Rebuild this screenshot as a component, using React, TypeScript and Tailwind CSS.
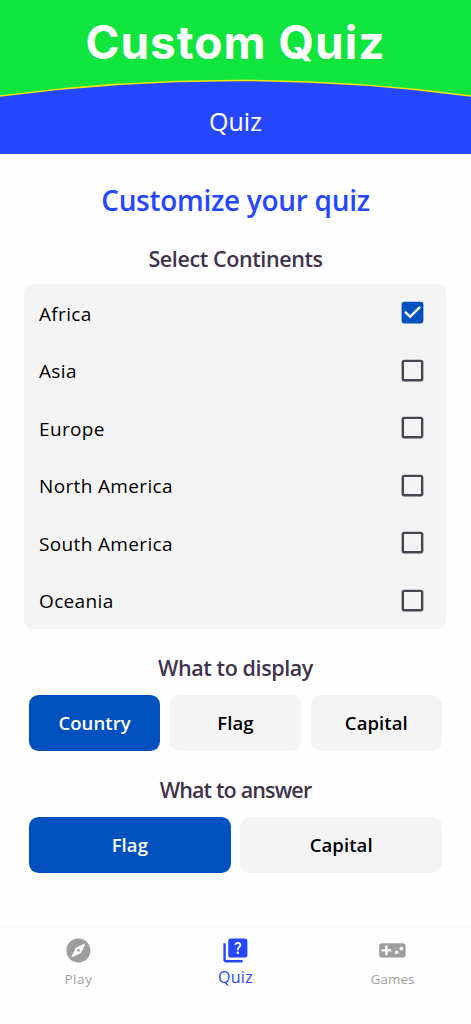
import React, { useState } from "react";
import {
  MdCheckBox,
  MdCheckBoxOutlineBlank,
  MdExplore,
  MdQuiz,
  MdVideogameAsset,
} from "react-icons/md";

const CONTINENTS = ["Africa", "Asia", "Europe", "North America", "South America", "Oceania"];

interface OptionRowProps {
  options: string[];
  value: string;
  onChange: (value: string) => void;
}

function OptionRow({ options, value, onChange }: OptionRowProps) {
  return (
    <div className="mx-[29px] flex h-14 gap-[9.6px]">
      {options.map((option) => (
        <button
          key={option}
          type="button"
          onClick={() => onChange(option)}
          className={`flex-1 rounded-[9.6px] text-[18.5px] font-semibold leading-none tracking-[0.1px] ${
            option === value ? "bg-[#0050bd] text-white" : "bg-[#f4f4f4] text-black"
          }`}
        >
          {option}
        </button>
      ))}
    </div>
  );
}

interface SectionTitleProps {
  children: React.ReactNode;
  tight?: boolean;
}

function SectionTitle({ children, tight }: SectionTitleProps) {
  return (
    <h3
      className={`flex h-8 items-center justify-center text-[21.5px] font-semibold text-[#40334c] ${
        tight ? "tracking-[-0.85px]" : "tracking-[-0.4px]"
      }`}
    >
      {children}
    </h3>
  );
}

export default function App() {
  const [selected, setSelected] = useState<string[]>(["Africa"]);
  const [display, setDisplay] = useState("Country");
  const [answer, setAnswer] = useState("Flag");

  const toggle = (name: string) =>
    setSelected((prev) =>
      prev.includes(name) ? prev.filter((item) => item !== name) : [...prev, name]
    );

  return (
    <div
      className="flex h-[1024px] w-[471px] flex-col overflow-hidden bg-[#fefefe]"
      style={{ fontFamily: '"Open Sans","Noto Sans",sans-serif' }}
    >
      <header className="relative h-[154px] shrink-0 bg-[#2547ff]">
        <svg className="absolute inset-0" width="471" height="154" viewBox="0 0 471 154">
          <path d="M0 0H471V96Q235.5 65 0 96Z" fill="#0fe53c" />
          <path d="M0 96Q235.5 65 471 96" fill="none" stroke="#f5e800" strokeWidth="1.5" />
        </svg>
        <div className="relative flex h-full flex-col items-center">
          <h1
            className="flex h-[86px] items-center whitespace-nowrap pb-0.5 text-[46px] font-bold tracking-[1px] text-white"
            style={{ fontFamily: "Inter,sans-serif" }}
          >
            Custom Quiz
          </h1>
          <p className="mt-[15px] text-[25px] leading-10 text-white">Quiz</p>
        </div>
      </header>

      <main className="flex flex-1 flex-col">
        <h2 className="mt-[26px] flex h-10 items-center justify-center text-[28px] font-semibold tracking-[-0.3px] text-[#2547ff]">
          Customize your quiz
        </h2>
        <div className="mt-[23px]">
          <SectionTitle>Select Continents</SectionTitle>
        </div>

        <ul className="ml-[24px] mr-[24.5px] mt-[9px] h-[345px] rounded-[9.6px] bg-[#f4f4f4]">
          {CONTINENTS.map((name) => (
            <li key={name} className="h-[57.5px]">
              <button
                type="button"
                onClick={() => toggle(name)}
                className="flex h-full w-full items-center justify-between pl-[15px] pr-[19.5px] text-[19px] tracking-[0.35px] text-black"
              >
                <span className="pt-0.5">{name}</span>
                {selected.includes(name) ? (
                  <MdCheckBox size={29} color="#0050bd" />
                ) : (
                  <MdCheckBoxOutlineBlank size={29} color="#494550" />
                )}
              </button>
            </li>
          ))}
        </ul>

        <div className="mb-[11px] mt-[23px]">
          <SectionTitle>What to display</SectionTitle>
        </div>
        <OptionRow options={["Country", "Flag", "Capital"]} value={display} onChange={setDisplay} />

        <div className="mb-[11px] mt-[23px]">
          <SectionTitle tight>What to answer</SectionTitle>
        </div>
        <OptionRow options={["Flag", "Capital"]} value={answer} onChange={setAnswer} />
      </main>

      <nav className="flex h-[98px] shrink-0 border-t border-[#f8f8f8] bg-[#fefefe] pt-[9px] text-[#9e9e9e]">
        <div className="flex flex-1 flex-col items-center">
          <MdExplore size={28.8} />
          <span className="mt-[4px] text-[13.5px] leading-5 tracking-[0.6px]">Play</span>
        </div>
        <div className="flex flex-1 flex-col items-center text-[#2547ff]">
          <MdQuiz size={28.8} />
          <span className="mt-[2px] text-[16px] leading-5 tracking-[0.3px]">Quiz</span>
        </div>
        <div className="flex flex-1 flex-col items-center">
          <MdVideogameAsset size={28.8} />
          <span className="mt-[4px] text-[13.5px] leading-5">Games</span>
        </div>
      </nav>
    </div>
  );
}
